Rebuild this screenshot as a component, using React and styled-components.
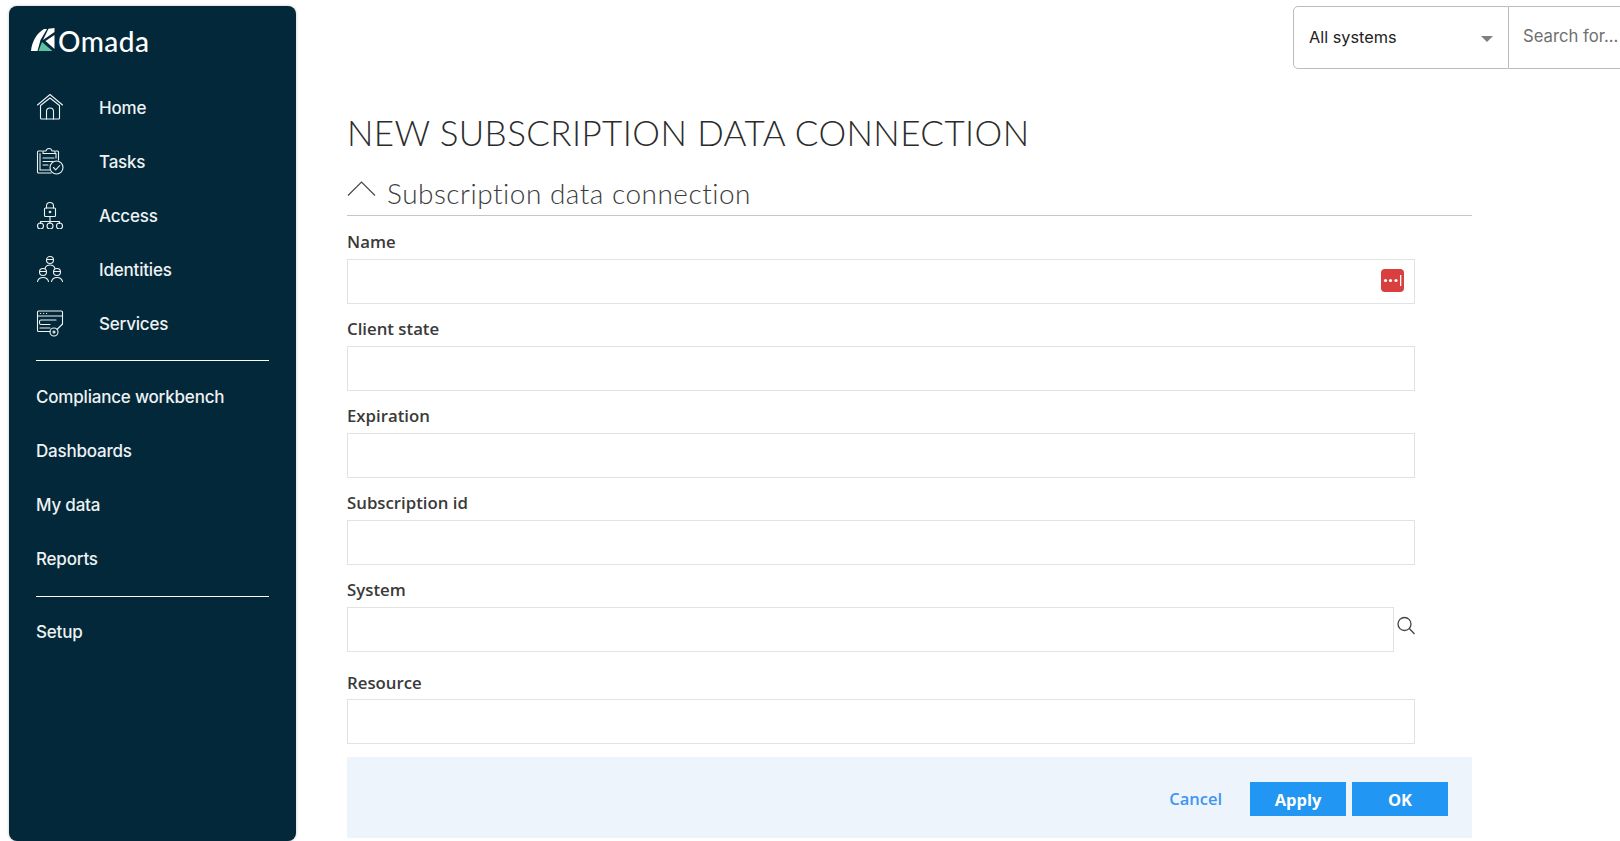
import React from 'react';
import styled, { createGlobalStyle } from 'styled-components';

const GlobalStyle = createGlobalStyle`
  html, body {
    margin: 0;
    padding: 0;
    height: 100%;
    overflow: hidden;
    background: #fff;
    font-family: "Open Sans", "Liberation Sans", sans-serif;
  }
  * { box-sizing: border-box; }
`;

const Page = styled.div`
  display: flex;
  width: 1620px;
  height: 841px;
  overflow: hidden;
`;

const Sidebar = styled.aside`
  flex: none;
  width: 287px;
  height: 835px;
  margin: 6px 0 0 9px;
  padding: 0 27px;
  background: #022839;
  border-radius: 8px;
  box-shadow: 0 0 3px rgba(0, 0, 0, 0.25);
  color: #eef2f3;
  font-family: Inter, "Liberation Sans", sans-serif;
`;

const Logo = styled.div`
  display: flex;
  align-items: center;
  height: 24px;
  margin: 21px 0 30px -5px;
  gap: 3px;
`;

const LogoText = styled.span`
  padding-top: 3px;
  font-family: Lato, sans-serif;
  font-size: 28px;
  font-weight: 500;
  letter-spacing: 0.5px;
  color: #fff;
`;

const NavItem = styled.div`
  display: flex;
  align-items: center;
  height: 54px;
  font-size: 17px;
  font-weight: 500;
  letter-spacing: -0.2px;
`;

const NavIcon = styled.svg`
  flex: none;
  width: 28px;
  height: 28px;
  margin: -2px 35px 0 0;
  fill: none;
  stroke: #eef2f3;
  stroke-width: 1.1;
  stroke-linecap: round;
  stroke-linejoin: round;
`;

const NavRule = styled.hr`
  margin: ${(p) => p.$top}px 0 ${(p) => p.$bottom}px;
  border: 0;
  border-top: 1px solid #fff;
`;

const Main = styled.main`
  flex: 1;
  min-width: 0;
  padding-left: 51px;
`;

const TopBar = styled.div`
  display: flex;
  justify-content: flex-end;
  padding-top: 6px;
  margin-right: -9px;
`;

const SystemSelect = styled.div`
  display: flex;
  align-items: center;
  justify-content: space-between;
  width: 216px;
  height: 63px;
  padding: 0 15px 2px;
  border: 1px solid #bcbcbc;
  border-radius: 5px 0 0 5px;
  font-family: Inter, sans-serif;
  font-size: 16.3px;
  color: #222;
`;

const Caret = styled.span`
  width: 0;
  height: 0;
  margin-top: 4px;
  border-left: 6px solid transparent;
  border-right: 6px solid transparent;
  border-top: 6px solid #808080;
`;

const SearchBox = styled.div`
  display: flex;
  align-items: center;
  width: 120px;
  height: 63px;
  padding: 0 0 3px 14px;
  border: 1px solid #bcbcbc;
  border-left: 0;
  font-family: Inter, sans-serif;
  font-size: 16.7px;
  color: #6f6f6f;
  white-space: nowrap;
`;

const Title = styled.h1`
  margin: 42px 0 0;
  font-family: Lato, sans-serif;
  font-size: 35px;
  font-weight: 300;
  line-height: 42px;
  letter-spacing: 0.4px;
  color: #2b2b2b;
`;

const SectionHead = styled.div`
  display: flex;
  align-items: center;
  width: 1125px;
  height: 45px;
  margin-top: 18px;
  padding-bottom: 1px;
  border-bottom: 1px solid #c6c6c6;
  font-family: Lato, sans-serif;
  font-size: 28px;
  font-weight: 300;
  letter-spacing: 0.5px;
  color: #3c3c3c;
`;

const Chevron = styled.svg`
  flex: none;
  width: 29px;
  height: 17px;
  margin-right: 11px;
  margin-top: -8px;
  fill: none;
  stroke: #444;
  stroke-width: 1.1;
`;

const Field = styled.div`
  width: 1068px;
  margin-top: ${(p) => p.$top || 0}px;
`;

const Label = styled.label`
  display: block;
  height: ${(p) => p.$height || 33}px;
  padding-top: 4px;
  font-size: 16.8px;
  font-weight: 600;
  line-height: 24px;
  color: #3a3a3a;
`;

const InputRow = styled.div`
  display: flex;
  align-items: flex-start;
  position: relative;
`;

const Input = styled.div`
  flex: 1;
  height: 45px;
  border: 1px solid #e2e2e2;
  background: #fff;
`;

const PassBadge = styled.svg`
  position: absolute;
  top: 10px;
  right: 11px;
  width: 23px;
  height: 23px;
`;

const Lookup = styled.svg`
  flex: none;
  width: 21px;
  height: 21px;
  margin-top: 8px;
  fill: none;
  stroke: #444;
  stroke-width: 1.3;
`;

const Footer = styled.div`
  display: flex;
  align-items: center;
  justify-content: flex-end;
  width: 1125px;
  height: 81px;
  margin-top: 13px;
  padding: 2px 24px 0 0;
  background: #edf4fc;
`;

const CancelLink = styled.span`
  margin-right: 28px;
  font-size: 16.5px;
  font-weight: 600;
  color: #3f96ee;
`;

const ActionButton = styled.button`
  width: 96px;
  height: 34px;
  margin-left: ${(p) => p.$gap || 0}px;
  padding: 1px 0 0;
  border: 0;
  background: #2196f3;
  color: #fff;
  font-family: "Open Sans", sans-serif;
  font-size: 16.5px;
  font-weight: 700;
`;

const navTop = [
  {
    label: 'Home',
    icon: (
      <>
        <path d="M1.500 12 14 1.500 26.500 12" />
        <path d="M4.500 12.500 14 5 23.500 12.500V25q0 1-1 1H5.500q-1 0-1-1Z" />
        <path d="M10.500 26V18.500q0-3.500 3.500-3.500t3.500 3.500V26" />
      </>
    ),
  },
  {
    label: 'Tasks',
    icon: (
      <>
        <path d="M15 26H2.500q-1 0-1-1V5q0-1 1-1H6M20 4h1.500q1 0 1 1v8" />
        <path d="M4 6.500V23h10M20 11V6.500h-1" />
        <path d="M7 6.500V4h3q.5-2.500 3-2.500T16 4h3v2.500Z" />
        <path d="M7 11h11M7 14.500h10M7 18h5" />
        <circle cx="20.500" cy="20.500" r="6.500" />
        <path d="m17.500 20.500 2.200 2.300 4-4.300" />
      </>
    ),
  },
  {
    label: 'Access',
    icon: (
      <>
        <rect x="8.500" y="7" width="11" height="8.500" rx="1" />
        <path d="M10.500 7V5q0-3.500 3.500-3.500T17.500 5v2" />
        <circle cx="14" cy="11" r=".8" />
        <path d="M14 15.500v5M4.500 22.500v-2h19v2M14 20.500v2" />
        <circle cx="4.500" cy="25" r="3" />
        <circle cx="14" cy="25" r="3" />
        <circle cx="23.500" cy="25" r="3" />
      </>
    ),
  },
  {
    label: 'Identities',
    icon: (
      <>
        <circle cx="14" cy="5" r="3.500" />
        <path d="M10.800 4.500h6.400M9 13.500q1-3.500 5-3.500t5 3.500" />
        <circle cx="7" cy="17" r="3.500" />
        <path d="M3.800 16.500h6.400M1.500 26.500q1-4 5.500-4t5.500 4" />
        <circle cx="21" cy="17" r="3.500" />
        <path d="M17.800 16.500h6.400M15.500 26.500q1-4 5.500-4t5.500 4" />
      </>
    ),
  },
  {
    label: 'Services',
    icon: (
      <>
        <path d="M14 22.500H2.500q-1 0-1-1V3q0-1 1-1h23q1 0 1 1v12" />
        <path d="M1.500 7h25M4.500 4.500h.2M7.500 4.500h.2M10.500 4.500h.2" />
        <path d="M20 11H5q-1.500 0-1.500 1.500V14Q3.500 15.500 5 15.500h9M4 19h10" />
        <circle cx="18" cy="23" r="4" />
        <circle cx="18" cy="23" r="1" />
        <path d="M21 20.500 26.500 15" />
      </>
    ),
  },
];

const navMiddle = ['Compliance workbench', 'Dashboards', 'My data', 'Reports'];

const fields = ['Name', 'Client state', 'Expiration', 'Subscription id'];

const App = () => {
  return (
    <>
      <GlobalStyle />
      <Page>
        <Sidebar>
          <Logo>
            <svg width="24" height="24" viewBox="0 0 24 24">
              <path d="M0 24C1 14 6 6 13 2H16L9.500 13 6.500 24Z" fill="#fff" />
              <path d="M17.500 1.800 23.500 1V5L12 13Z" fill="#fff" />
              <path d="M14.500 14 23.500 8V22Z" fill="#fff" />
              <path d="M7.500 24 11 15 21.500 24Z" fill="#5cc2a0" />
            </svg>
            <LogoText>Omada</LogoText>
          </Logo>
          {navTop.map((item) => (
            <NavItem key={item.label}>
              <NavIcon viewBox="0 0 28 28">{item.icon}</NavIcon>
              {item.label}
            </NavItem>
          ))}
          <NavRule $top={9} $bottom={9} />
          {navMiddle.map((label) => (
            <NavItem key={label}>{label}</NavItem>
          ))}
          <NavRule $top={10} $bottom={8} />
          <NavItem>Setup</NavItem>
        </Sidebar>

        <Main>
          <TopBar>
            <SystemSelect>
              All systems
              <Caret />
            </SystemSelect>
            <SearchBox>Search for...</SearchBox>
          </TopBar>

          <Title>NEW SUBSCRIPTION DATA CONNECTION</Title>

          <SectionHead>
            <Chevron viewBox="0 0 29 17">
              <path d="M1 15.500 14.500 2 28 15.500" />
            </Chevron>
            Subscription data connection
          </SectionHead>

          {fields.map((name, i) => (
            <Field key={name} $top={i === 0 ? 10 : 9}>
              <Label>{name}</Label>
              <InputRow>
                <Input />
                {i === 0 && (
                  <PassBadge viewBox="0 0 23 23">
                    <rect width="23" height="23" rx="4" fill="#d93f3f" />
                    <circle cx="4.500" cy="11.500" r="1.600" fill="#fff" />
                    <circle cx="9.500" cy="11.500" r="1.600" fill="#fff" />
                    <circle cx="15" cy="11.500" r="1.600" fill="#fff" />
                    <rect x="19" y="6" width="1.300" height="11" fill="#fff" />
                  </PassBadge>
                )}
              </InputRow>
            </Field>
          ))}

          <Field $top={9}>
            <Label>System</Label>
            <InputRow>
              <Input />
              <Lookup viewBox="0 0 21 21">
                <circle cx="10.500" cy="9" r="6.500" />
                <path d="m15.300 13.500 5.200 5.500" />
              </Lookup>
            </InputRow>
          </Field>

          <Field $top={15}>
            <Label $height={32}>Resource</Label>
            <InputRow>
              <Input />
            </InputRow>
          </Field>

          <Footer>
            <CancelLink>Cancel</CancelLink>
            <ActionButton>Apply</ActionButton>
            <ActionButton $gap={6}>OK</ActionButton>
          </Footer>
        </Main>
      </Page>
    </>
  );
};

export default App;
